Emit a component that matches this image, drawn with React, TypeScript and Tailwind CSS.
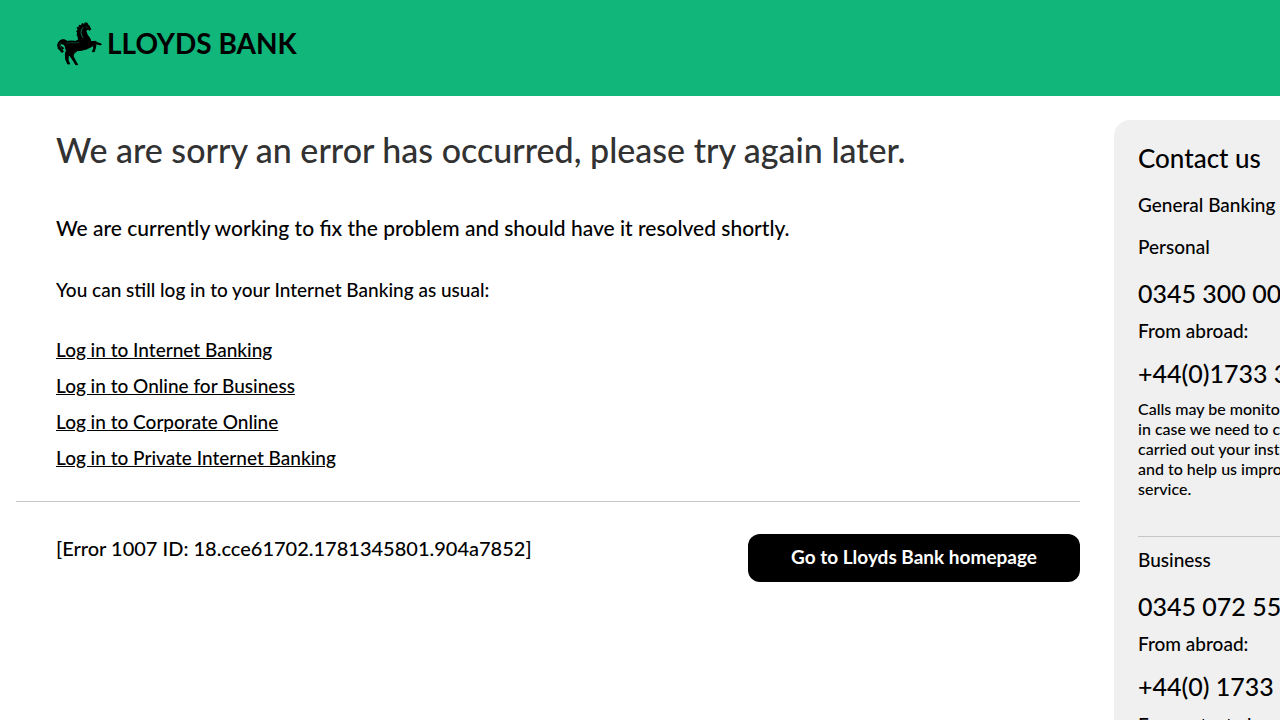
const loginLinks = [
  "Log in to Internet Banking",
  "Log in to Online for Business",
  "Log in to Corporate Online",
  "Log in to Private Internet Banking",
];

function Horse() {
  return (
    <svg viewBox="18 15 138 135" className="h-[45px] w-[46px]" fill="currentColor" aria-hidden="true">
      <path
        stroke="currentColor"
        strokeWidth="3"
        strokeLinejoin="round"
        d="M110 20 L113 25 L118 30 L122 40 L120 43 L116 41 L110 40 L108 46 L112 57 L119 66 L123 77 L136 76 L142 80 L154 84 L152 87 L138 83 L137 92 L133 107 L127 107 L131 98 L131 88 L124 92 L110 99 L94 103 L82 104 L72 112 L69 120 L77 136 L83 146 L77 146 L71 136 L60 119 L55 118 L54 132 L59 144 L53 144 L47 130 L46 114 L49 104 L46 92 L42 85 L34 83 L30 88 L35 93 L41 96 L37 101 L40 107 L35 109 L30 103 L25 98 L23 87 L26 78 L33 72 L43 71 L52 76 L64 75 L77 76 L86 71 L84 62 L81 57 L83 51 L80 46 L84 41 L81 35 L88 35 L87 28 L95 29 L96 23 L103 25 L106 20 L108 23 Z"
      />
      <g fill="none" stroke="#11b67a" strokeLinecap="round">
        <path strokeWidth="2" d="M99 35 C91 43 91 55 99 65" />
        <path strokeWidth="1.5" opacity=".7" d="M50 82 C61 77 73 84 86 79" />
        <path strokeWidth="1.5" opacity=".7" d="M31 80 C27 88 31 95 36 99" />
        <path strokeWidth="1.5" opacity=".7" d="M108 33 L112 34" />
      </g>
    </svg>
  );
}

export default function App() {
  return (
    <div className="h-screen overflow-hidden bg-white font-['Lato','Liberation_Sans',sans-serif] font-medium text-black">
      <header className="h-24 bg-[#11b67a] px-14 pt-[19px]">
        <a href="#home" className="inline-flex items-center gap-[5px]">
          <Horse />
          <span className="text-[28px] leading-[48px] font-bold whitespace-nowrap">LLOYDS BANK</span>
        </a>
      </header>
      <div className="flex pt-6 pl-4">
        <main className="mr-[34px] min-w-0 flex-1">
          <div className="border-b border-[#c6c6c6] px-10 pt-[6px] pb-[25px]">
            <h1 className="text-[34px] leading-[48px] text-[#323233]">
              We are sorry an error has occurred, please try again later.
            </h1>
            <p className="mt-[38px] text-[21px] leading-8">
              We are currently working to fix the problem and should have it resolved shortly.
            </p>
            <p className="mt-8 text-[19px] leading-7">You can still log in to your Internet Banking as usual:</p>
            <ul className="mt-7">
              {loginLinks.map((label) => (
                <li key={label} className="text-[19px] leading-9">
                  <a href="#login" className="underline">{label}</a>
                </li>
              ))}
            </ul>
          </div>
          <div className="flex items-start justify-between pt-8 pl-10">
            <p className="text-xl leading-7">[Error 1007 ID: 18.cce61702.1781345801.904a7852]</p>
            <a
              href="#homepage"
              className="flex h-12 w-[332px] items-center justify-center rounded-xl bg-black pb-[2px] text-[19px] font-bold text-white"
            >
              Go to Lloyds Bank homepage
            </a>
          </div>
        </main>
        <aside className="-mr-[166px] w-[332px] shrink-0 rounded-2xl bg-[#f0f0f0] px-6 pt-5 pb-8 whitespace-nowrap">
          <h2 className="text-[26px] leading-9">Contact us</h2>
          <p className="mt-[15px] text-[19px] leading-7">General Banking Queries</p>
          <h3 className="mt-[14px] text-[19px] leading-7">Personal</h3>
          <p className="mt-4 text-[25px] leading-8">0345 300 0000</p>
          <p className="mt-2 text-[19px] leading-7">From abroad:</p>
          <p className="mt-3 text-[25px] leading-8">+44(0)1733 347 007</p>
          <p className="mt-[10px] text-[16px] leading-5">
            Calls may be monitored or recorded
            <br />
            in case we need to check we have
            <br />
            carried out your instructions correctly
            <br />
            and to help us improve our quality of
            <br />
            service.
          </p>
          <hr className="mt-[37px] border-[#c6c6c6]" />
          <h3 className="mt-[9px] text-[19px] leading-7">Business</h3>
          <p className="mt-4 text-[25px] leading-8">0345 072 5555</p>
          <p className="mt-2 text-[19px] leading-7">From abroad:</p>
          <p className="mt-3 text-[25px] leading-8">+44(0) 1733 347 338</p>
          <p className="mt-[9px] text-[19px] leading-7">For contact abroad</p>
        </aside>
      </div>
    </div>
  );
}
